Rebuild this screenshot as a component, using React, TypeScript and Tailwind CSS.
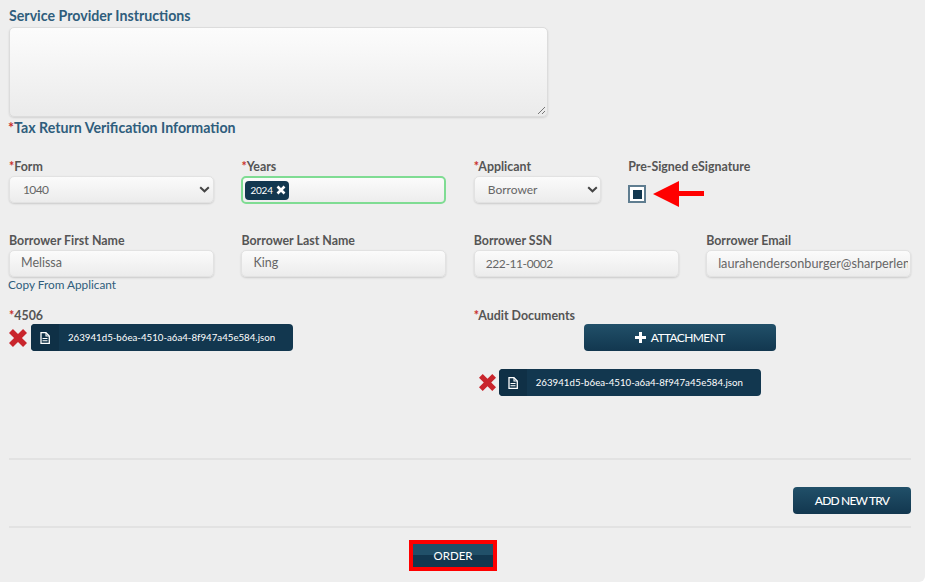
import React from "react";

const field = "h-[27px] rounded-[5px] border border-[#e2e2e2] bg-gradient-to-b from-[#fbfbfb] to-[#ececec] shadow-[0_1px_2px_rgba(0,0,0,0.15)] text-[12.5px] text-[#666] flex items-center";
const label = "text-[12.4px] leading-[16px] font-bold text-[#555]";
const dark = "bg-gradient-to-b from-[#215069] to-[#12374f] text-white";

function Star() {
  return <span className="text-[#c9302c]">*</span>;
}

function Chevron() {
  return (
    <svg width="11" height="7" viewBox="0 0 11 7" className="ml-auto">
      <path d="M1.2 1.2 5.5 5.3 9.8 1.2" fill="none" stroke="#444" strokeWidth="2" />
    </svg>
  );
}

function RedX({ size }: { size: number }) {
  return (
    <svg width={size} height={size} viewBox="0 0 16 16">
      <path d="M0 3.500 3.500 0 8 4.500 12.500 0 16 3.500 11.500 8 16 12.500 12.500 16 8 11.500 3.500 16 0 12.500 4.500 8z" fill="#c9252c" />
    </svg>
  );
}

function FileChip() {
  return (
    <div className="flex h-[27px] w-[262px] items-stretch overflow-hidden rounded-[4px] bg-[#12374f] text-white">
      <div className="flex w-[28px] items-center justify-center bg-[#0f3046]">
        <svg width="10" height="12" viewBox="0 0 10 12">
          <path d="M1 .7h5L9.300 4v7.300H1z" fill="none" stroke="#fff" strokeWidth="1.3" />
          <path d="M2.500 6.500h5M2.500 8.800h5M6 1v3h3" fill="none" stroke="#fff" strokeWidth="1.1" />
        </svg>
      </div>
      <span className="ml-[9px] self-center text-[9.7px] whitespace-nowrap">263941d5-b6ea-4510-a6a4-8f947a45e584.json</span>
    </div>
  );
}

export default function App() {
  return (
    <div className="h-[582px] w-[925px] rounded-br-[6px] bg-[#eeeeee] pt-[8px] pr-[14px] pl-[9px] font-['Lato','Noto_Sans',sans-serif]">
      <div className="text-[14.2px] leading-[16px] font-bold text-[#2f5d7c]">Service Provider Instructions</div>
      <div className="relative mt-[3px] h-[90px] w-[539px] rounded-[5px] border border-[#dcdcdc] bg-gradient-to-b from-[#fcfcfc] to-[#ebebeb] shadow-[0_1px_2px_rgba(0,0,0,0.12)]">
        <svg width="9" height="9" viewBox="0 0 9 9" className="absolute right-[1px] bottom-[1px]">
          <path d="M1 8 8 1M5 8l3-3" stroke="#777" strokeWidth="1" />
        </svg>
      </div>
      <div className="mt-[3px] -ml-[1px] text-[14.2px] leading-[16px] font-bold text-[#2f5d7c]"><Star />Tax Return Verification Information</div>

      <div className="mt-[23px] grid grid-cols-4 gap-x-[27.5px]">
        <div>
          <div className={label}><Star />Form</div>
          <div className={`${field} mt-[1px] pr-[2px] pl-[13px]`}>
            <span className="text-[12px] tracking-[-0.6px]">1040</span><span className="ml-auto pr-[1px]"><Chevron /></span>
          </div>
        </div>
        <div>
          <div className={label}><Star />Years</div>
          <div className="mt-[1px] flex h-[28px] items-center rounded-[5px] border-2 border-[#7fdc93] bg-gradient-to-b from-[#fbfbfb] to-[#ededed] pl-[2px]">
            <div className="flex h-[19px] w-[44px] items-center gap-[3px] rounded-[4px] bg-[#12374f] pl-[5px] text-[10px] tracking-[-0.2px] text-white">
              2024
              <svg width="10" height="10" viewBox="0 0 10 10"><path d="M1.500 1.500 8.500 8.500M8.500 1.500 1.500 8.500" stroke="#fff" strokeWidth="2.6" /></svg>
            </div>
          </div>
        </div>
        <div>
          <div className={label}><Star />Applicant</div>
          <div className={`${field} mt-[1px] w-[127px] pr-[2px] pl-[13px]`}>
            <span className="text-[12px]">Borrower</span><span className="ml-auto"><Chevron /></span>
          </div>
        </div>
        <div className="-ml-[78px]">
          <div className={label}>Pre-Signed eSignature</div>
          <div className="mt-[5px] flex items-center">
            <div className="flex h-[18px] w-[18px] items-center justify-center border-2 border-[#5f7d90] bg-white">
              <div className="h-[9px] w-[9px] bg-[#12374f]" />
            </div>
            <svg width="52" height="28" viewBox="0 0 52 28" className="ml-[6px]">
              <path d="M1 14 27 1v10h25v5H27v11z" fill="#ff0000" />
            </svg>
          </div>
        </div>
      </div>

      <div className="mt-[25px] grid grid-cols-4 gap-x-[27.5px]">
        <div>
          <div className={label}>Borrower First Name</div>
          <div className={`${field} mt-[1px] pl-[11px]`}>Melissa</div>
          <div className="-ml-[1px] text-[11.8px] leading-[16px] text-[#2f5d7c]">Copy From Applicant</div>
        </div>
        <div>
          <div className={label}>Borrower Last Name</div>
          <div className={`${field} mt-[1px] pl-[11px]`}>King</div>
        </div>
        <div>
          <div className={label}>Borrower SSN</div>
          <div className={`${field} mt-[1px] pl-[11px]`}>
            <span className="text-[12px] tracking-[-0.4px]">222-11-0002</span>
          </div>
        </div>
        <div>
          <div className={label}>Borrower Email</div>
          <div className={`${field} mt-[1px] overflow-hidden pl-[11px] whitespace-nowrap`}>
            <span className="block w-[190px] overflow-hidden text-[12.7px]">laurahendersonburger@sharperlending.com</span>
          </div>
        </div>
      </div>

      <div className="mt-[15px] grid h-[150px] grid-cols-2 gap-x-[27.5px]">
        <div>
          <div className={label}><Star />4506</div>
          <div className="flex items-center gap-[4px]">
            <RedX size={18} />
            <FileChip />
          </div>
        </div>
        <div>
          <div className={label}><Star />Audit Documents</div>
          <div className={`${dark} ml-[110px] flex h-[27px] w-[192px] items-center justify-center gap-[5px] rounded-[4px] text-[12px] tracking-[-0.6px]`}>
            <svg width="11" height="11" viewBox="0 0 11 11"><path d="M5.500 0v11M0 5.500h11" stroke="#fff" strokeWidth="3" /></svg>
            ATTACHMENT
          </div>
          <div className="mt-[18px] ml-[5px] flex items-center gap-[3px]">
            <RedX size={17} />
            <FileChip />
          </div>
        </div>
      </div>

      <div className="border-t-2 border-[#e2e2e2]" />
      <div className="mt-[27px] flex justify-end">
        <div className={`${dark} flex h-[27px] w-[118px] items-center justify-center rounded-[4px] text-[12px] font-medium tracking-[-0.8px]`}>ADD NEW TRV</div>
      </div>
      <div className="mt-[12px] border-t-2 border-[#e2e2e2]" />
      <div className="mt-[12px] flex justify-center pr-[14px]">
        <div className="flex h-[31px] w-[88px] items-center justify-center border-[4px] border-[#ff0000] bg-gradient-to-b from-[#215069] from-50% to-[#12374f] to-50% text-[11.5px] text-white">ORDER</div>
      </div>
    </div>
  );
}
